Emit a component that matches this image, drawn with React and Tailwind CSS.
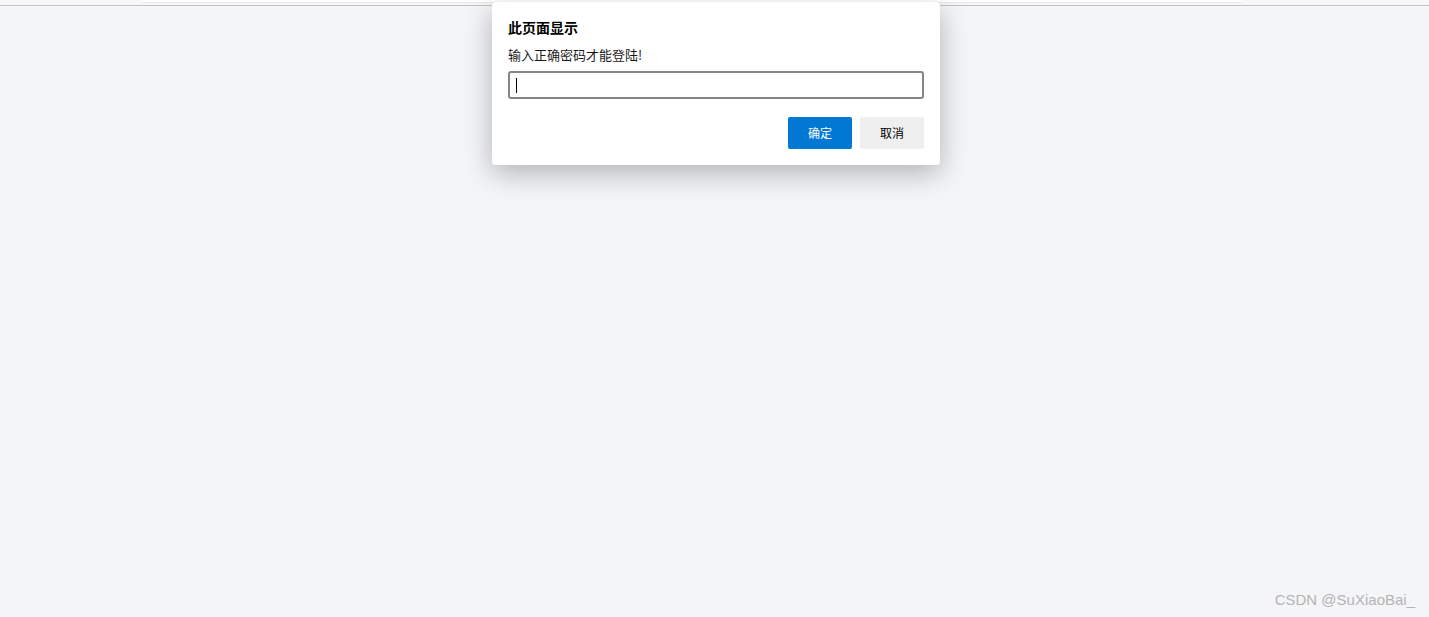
import React from 'react';

export default function App() {
  return (
    <div className="relative h-[617px] w-full overflow-hidden bg-[#f4f5f7] font-['Noto_Sans_CJK_SC',sans-serif]">
      {/* top strip */}
      <div className="h-[6px] border-b border-[#c2c2c2] bg-[#f7f7f7]">
        <div className="ml-[142px] mr-[187px] h-[2px] bg-white shadow-[0_1px_1px_rgba(0,0,0,0.06)]" />
      </div>

      {/* prompt dialog */}
      <div className="absolute left-[492px] top-[2px] w-[448px] rounded-[4px] bg-white px-4 pt-[15px] pb-4 shadow-[0_8px_28px_rgba(0,0,0,0.28)]">
        <div className="text-[14px] leading-[20px] font-bold text-black">此页面显示</div>
        <div className="mt-[8px] text-[13px] leading-[20px] text-[#1a1a1a]">输入正确密码才能登陆!</div>
        <div className="mt-[6px] flex h-[28px] items-center rounded-[3px] border-2 border-[#858585] px-[6px]">
          <div className="h-[15px] w-px bg-black" />
        </div>
        <div className="mt-[18px] flex justify-end gap-2">
          <button className="h-[32px] w-[64px] rounded-[2px] bg-[#0078d4] text-[12px] text-white">确定</button>
          <button className="h-[32px] w-[64px] rounded-[2px] bg-[#efefef] text-[12px] text-black">取消</button>
        </div>
      </div>

      {/* watermark */}
      <div className="absolute right-[14px] bottom-[6px] font-['Liberation_Sans',sans-serif] text-[15px] text-[#b4b4b4]">
        CSDN @SuXiaoBai_
      </div>
    </div>
  );
}
